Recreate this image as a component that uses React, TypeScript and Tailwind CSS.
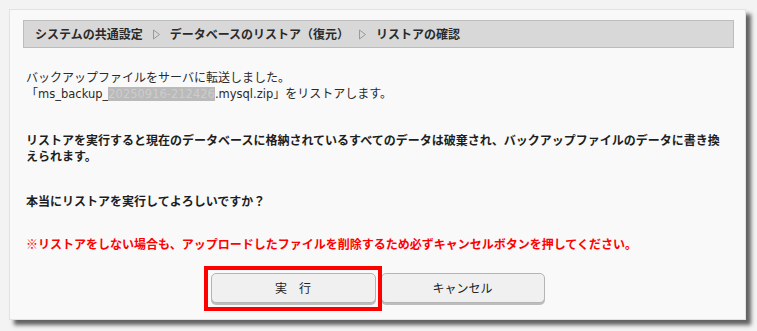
import React from "react";

function Tri() {
  return (
    <svg width="9" height="11" viewBox="0 0 9 11" className="mx-[9px] shrink-0">
      <path d="M1.5 1 L7.5 5.5 L1.5 10 Z" fill="none" stroke="#9a9a9a" strokeWidth="1" />
    </svg>
  );
}

export default function App() {
  const latin = "font-['DejaVu_Sans',sans-serif] text-[11.5px]";
  return (
    <div
      className="w-[757px] h-[331px] bg-[#f3f3f3] pt-[9px] pl-[9px]"
      style={{ fontFamily: '"Noto Sans CJK JP", "Noto Sans", sans-serif' }}
    >
      <div className="relative w-[737px] h-[311px] bg-[#f9f9f9] border border-[#e2e2e2] shadow-[5px_5px_4px_rgba(0,0,0,0.6)] pt-[10px] pl-[13px] pr-[11px]">
        <div className="h-[28px] bg-[#d8d8d8] border border-[#bdbdbd] flex items-center pl-[11px] text-[12px] font-bold text-[#2a2a2a]">
          <span>システムの共通設定</span>
          <Tri />
          <span>データベースのリストア（復元）</span>
          <Tri />
          <span>リストアの確認</span>
        </div>

        <div className="pl-[3px] text-[12px] leading-[16px] text-[#2a2a2a] w-[708px]">
          <p className="mt-[21px]">
            バックアップファイルをサーバに転送しました。
            <br />
            「<span className={latin}>ms_backup_</span>
            <span className={`${latin} bg-[#bababa] text-[#cdcdcd]`}>20250916-212426</span>
            <span className={latin}>.mysql.zip</span>」をリストアします。
          </p>
          <p className="mt-[30px] font-bold text-[#1e1e1e]">
            リストアを実行すると現在のデータベースに格納されているすべてのデータは破棄され、バックアップファイルのデータに書き換えられます。
          </p>
          <p className="mt-[29px] font-bold text-[#1e1e1e]">本当にリストアを実行してよろしいですか？</p>
          <p className="mt-[27px] font-bold text-[#ff0000]">
            ※リストアをしない場合も、アップロードしたファイルを削除するため必ずキャンセルボタンを押してください。
          </p>
        </div>

        <div className="mt-[21px] flex justify-center gap-[5px] pr-[2px]">
          <div className="relative">
            <button className="w-[165px] h-[30px] rounded-[5px] border border-[#b4b4b4] bg-[#f0f0f0] shadow-[0_2px_0_#bdbdbd] text-[12px] text-[#222]">
              実　行
            </button>
            <div className="absolute left-[-7px] top-[-7px] w-[178px] h-[45px] border-[4px] border-[#ff0000] pointer-events-none" />
          </div>
          <button className="w-[164px] h-[30px] rounded-[5px] border border-[#b4b4b4] bg-[#f0f0f0] shadow-[0_2px_0_#bdbdbd] text-[12px] text-[#222]">
            キャンセル
          </button>
        </div>
      </div>
    </div>
  );
}
